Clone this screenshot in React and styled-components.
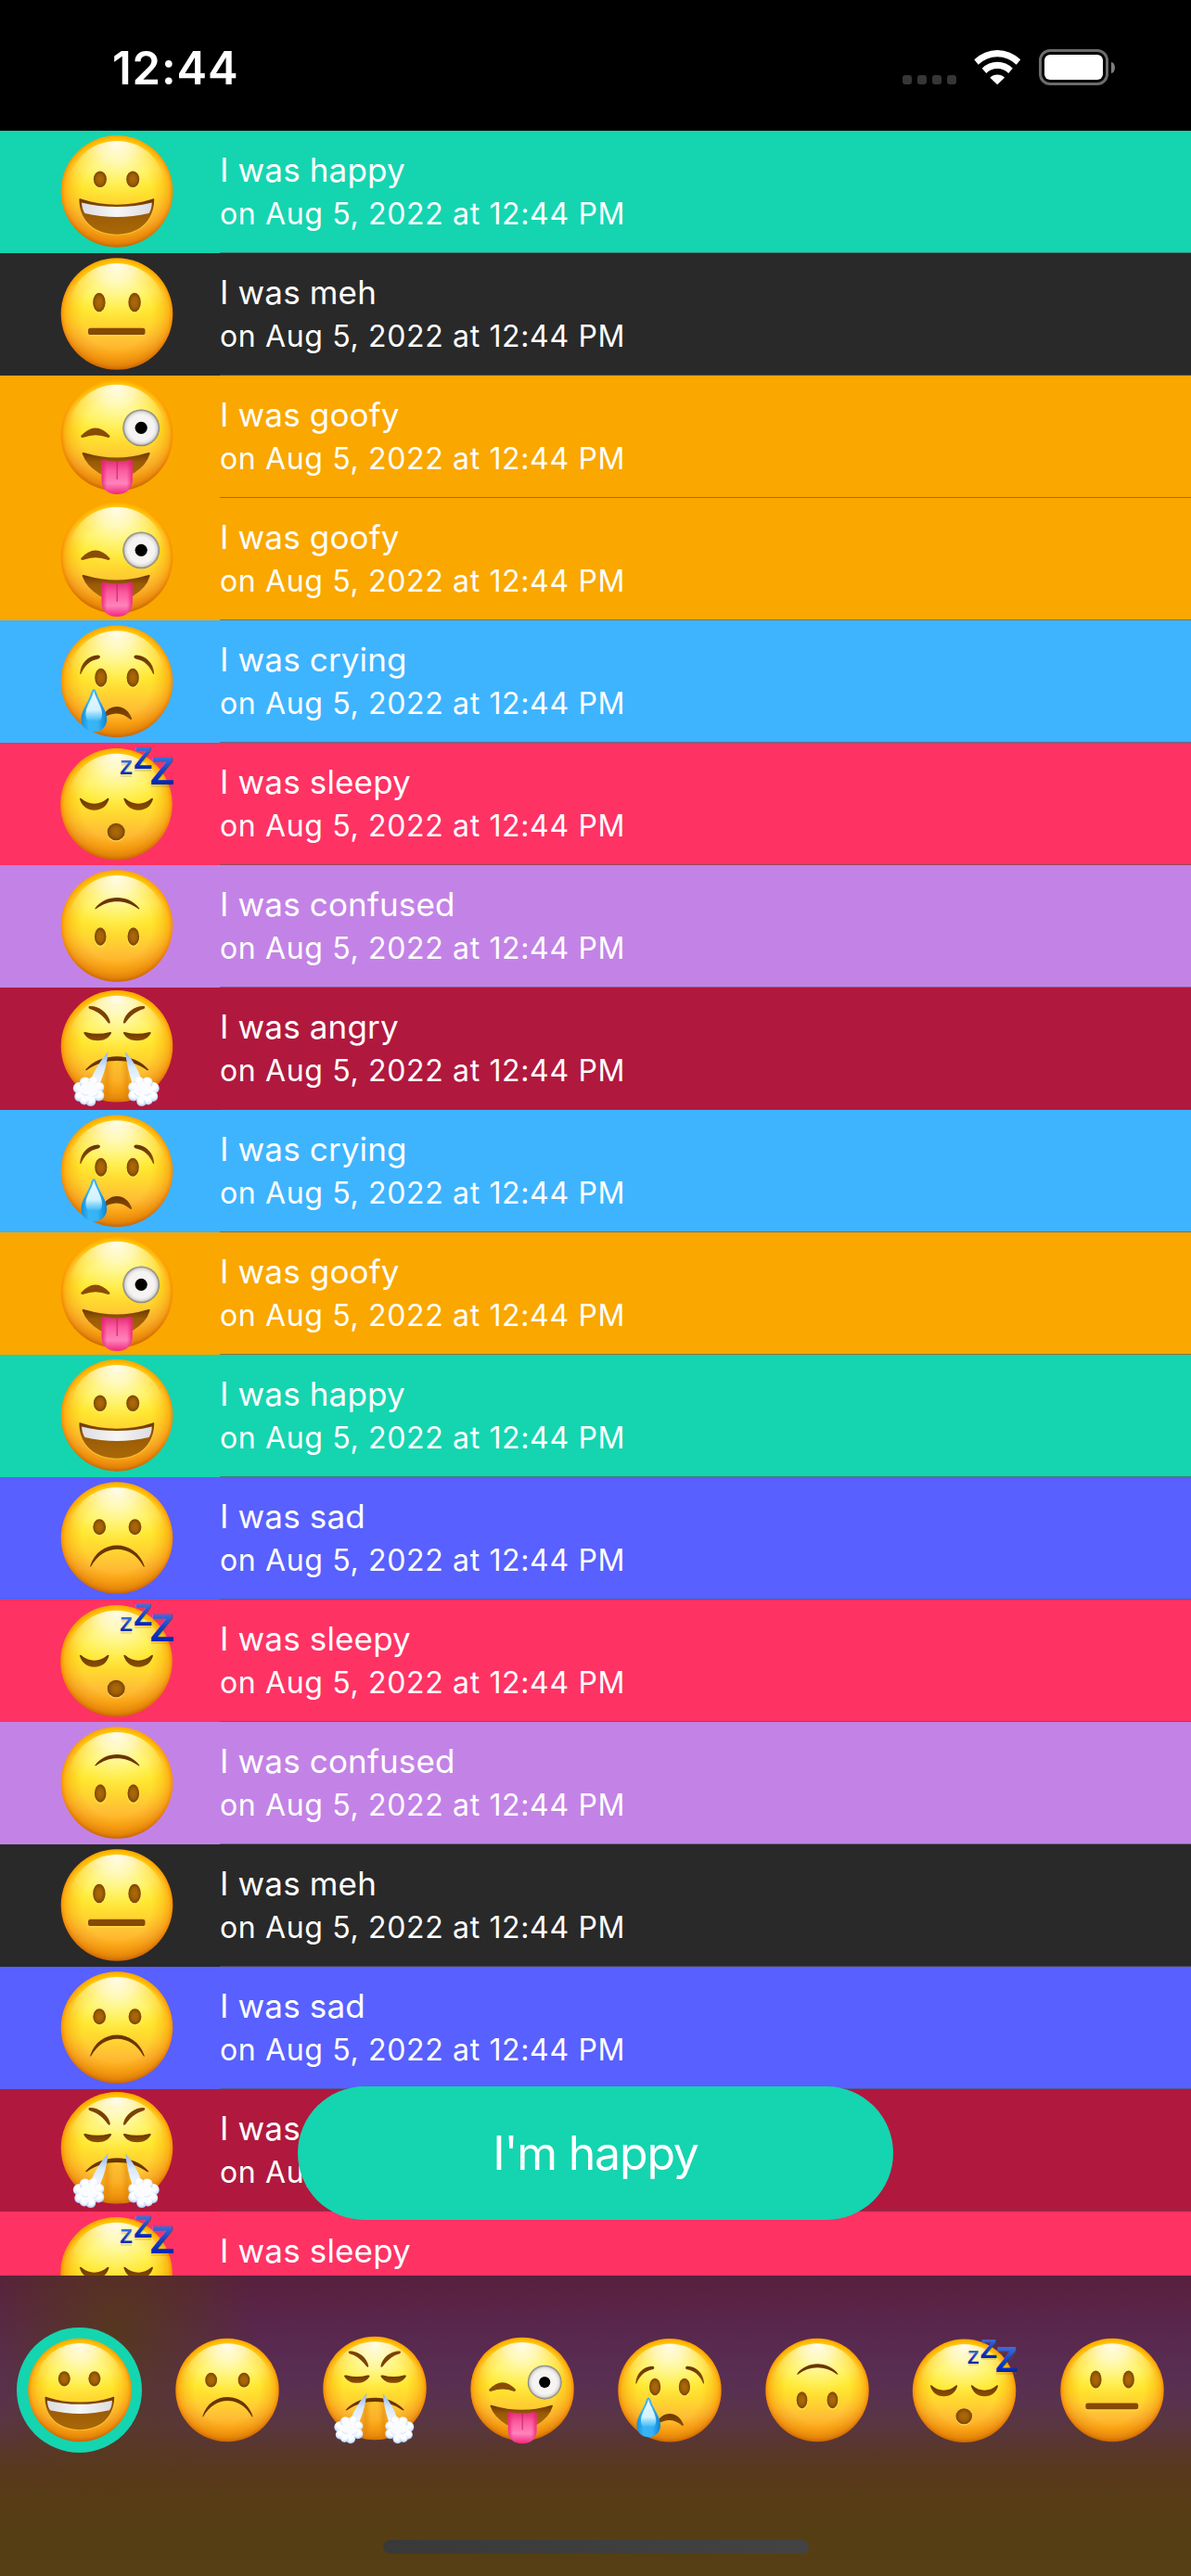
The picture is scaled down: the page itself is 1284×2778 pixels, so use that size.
import React from "react";
import styled, { createGlobalStyle } from "styled-components";

const GlobalStyle = createGlobalStyle`
  body {
    margin: 0;
    background: #000;
    font-family: Inter, "Liberation Sans", sans-serif;
  }
`;

const COLORS = {
  happy: "#14d5b0",
  meh: "#292929",
  goofy: "#faa700",
  crying: "#3eb4ff",
  sleepy: "#ff3264",
  confused: "#c383e6",
  angry: "#b1183e",
  sad: "#5860ff",
};

const ENTRIES = [
  "happy", "meh", "goofy", "goofy", "crying", "sleepy",
  "confused", "angry", "crying", "goofy", "happy", "sad",
  "sleepy", "confused", "meh", "sad", "angry", "sleepy",
];

const MOODS = ["happy", "sad", "angry", "goofy", "crying", "confused", "sleepy", "meh"];

const Screen = styled.div`
  position: relative;
  display: flex;
  flex-direction: column;
  width: 1284px;
  height: 2778px;
  overflow: hidden;
  background: #000;
`;

const StatusBar = styled.header`
  display: flex;
  justify-content: space-between;
  box-sizing: border-box;
  flex: none;
  height: 141px;
  padding: 53px 82px 0 121px;
`;

const Clock = styled.div`
  height: 41px;
  line-height: 41px;
  font-size: 49px;
  font-weight: 600;
  color: #fff;
  letter-spacing: 0.9px;
`;

const StatusIcons = styled.div`
  display: flex;
  height: 39px;
`;

const SignalDots = styled.div`
  display: flex;
  gap: 6px;
  padding-top: 28px;
  margin-right: 19px;
`;

const SignalDot = styled.span`
  width: 10px;
  height: 10px;
  border-radius: 3px;
  background: #363636;
`;

const WifiIcon = styled.svg`
  display: block;
  width: 51px;
  height: 38px;
  margin: 1px 19px 0 0;
`;

const Battery = styled.div`
  box-sizing: border-box;
  width: 75px;
  height: 39px;
  padding: 3px;
  border: 3px solid #6b6b6b;
  border-radius: 12px;
`;

const BatteryLevel = styled.div`
  height: 27px;
  border-radius: 6px;
  background: #fff;
`;

const BatteryCap = styled.span`
  width: 4px;
  height: 12px;
  margin: 14px 0 0 3px;
  border-radius: 0 4px 4px 0 / 0 6px 6px 0;
  background: #7d7d7d;
`;

const EntryList = styled.main`
  flex: none;
  height: 2313px;
  overflow: hidden;
`;

const EntryRow = styled.article`
  display: flex;
  height: 132px;
  padding-left: 60px;
  background: ${(p) => p.$color};
`;

const EntryBody = styled.div`
  display: flex;
  flex: 1;
  flex-direction: column;
  box-sizing: border-box;
  gap: 2px;
  margin-left: 45px;
  padding-top: 19px;
  border-bottom: 1px solid rgba(84, 84, 88, 0.65);
  color: #fff;
`;

const EntryTitle = styled.div`
  height: 46px;
  line-height: 46px;
  font-size: 35px;
  letter-spacing: 0.15px;
  white-space: nowrap;
`;

const EntryDate = styled.div`
  height: 46px;
  line-height: 46px;
  font-size: 32px;
  letter-spacing: 0.65px;
  white-space: nowrap;
`;

const AddButton = styled.button`
  position: absolute;
  left: 321px;
  bottom: 384px;
  width: 642px;
  height: 144px;
  padding: 0;
  border: 0;
  border-radius: 72px;
  background: ${(p) => p.$color};
  color: #fff;
  font: 400 50px/144px Inter, "Liberation Sans", sans-serif;
  letter-spacing: -1.2px;
`;

const Toolbar = styled.footer`
  display: flex;
  flex-direction: column;
  align-items: center;
  justify-content: space-between;
  box-sizing: border-box;
  flex: none;
  height: 324px;
  padding: 56px 18px 24px;
  background:
    radial-gradient(ellipse 150px 190px at 125px 60px, rgba(86, 60, 16, 0.75), rgba(86, 60, 16, 0.35) 55%, rgba(86, 60, 16, 0)),
    linear-gradient(
      #58203d 0, #59254a 45px, #592c52 93px, #593150 130px, #593642 159px,
      #593728 191px, #583919 219px, #563e14 265px, #563f14 324px
    );
`;

const MoodPicker = styled.nav`
  display: flex;
  gap: 24px;
`;

const MoodButton = styled.div`
  display: flex;
  align-items: center;
  justify-content: center;
  width: 135px;
  height: 135px;
  border-radius: 50%;
  background: ${(p) => p.$color || "transparent"};
`;

const HomeIndicator = styled.div`
  width: 459px;
  height: 15px;
  border-radius: 8px;
  background: linear-gradient(90deg, #393939, #434343);
`;

const FaceSvg = styled.svg`
  display: block;
  flex: none;
  width: ${(p) => p.$size}px;
  height: ${(p) => p.$size}px;
  overflow: visible;
`;

const Defs = styled.svg`
  position: absolute;
  width: 0;
  height: 0;
`;

function SharedGradients() {
  return (
    <Defs aria-hidden="true">
      <defs>
        <linearGradient id="rim" x1="0" y1="0" x2="0" y2="1">
          <stop offset="0" stopColor="#ffa600" />
          <stop offset="0.35" stopColor="#fc9200" />
          <stop offset="0.65" stopColor="#f28606" />
          <stop offset="1" stopColor="#c96502" />
        </linearGradient>
        <linearGradient id="skin" x1="0" y1="0" x2="0" y2="1">
          <stop offset="0" stopColor="#ffe600" />
          <stop offset="0.3" stopColor="#fff04a" />
          <stop offset="0.46" stopColor="#ffe72c" />
          <stop offset="0.6" stopColor="#ffd630" />
          <stop offset="0.76" stopColor="#ffbd35" />
          <stop offset="0.88" stopColor="#ffac18" />
          <stop offset="1" stopColor="#fca010" />
        </linearGradient>
        <radialGradient id="fade">
          <stop offset="0.62" stopColor="#fff" />
          <stop offset="0.82" stopColor="#fff" stopOpacity="0.72" />
          <stop offset="0.93" stopColor="#fff" stopOpacity="0.45" />
          <stop offset="1" stopColor="#fff" stopOpacity="0" />
        </radialGradient>
        <mask id="soft" maskContentUnits="objectBoundingBox">
          <circle cx="0.5" cy="0.5" r="0.5" fill="url(#fade)" />
        </mask>
        <radialGradient id="shine" cx="0.5" cy="0.02" r="0.62">
          <stop offset="0" stopColor="#fffef4" stopOpacity="0.96" />
          <stop offset="0.3" stopColor="#fffcd8" stopOpacity="0.8" />
          <stop offset="0.7" stopColor="#fff88c" stopOpacity="0.4" />
          <stop offset="1" stopColor="#ffee50" stopOpacity="0" />
        </radialGradient>
        <radialGradient id="brown">
          <stop offset="0" stopColor="#ad6b06" />
          <stop offset="0.55" stopColor="#a06007" />
          <stop offset="1" stopColor="#7a4304" />
        </radialGradient>
        <linearGradient id="brow" x1="0" y1="0" x2="0" y2="1">
          <stop offset="0" stopColor="#6a3500" />
          <stop offset="1" stopColor="#8c4f06" />
        </linearGradient>
        <linearGradient id="mouth" x1="0" y1="0" x2="0" y2="1">
          <stop offset="0" stopColor="#6c3600" />
          <stop offset="0.4" stopColor="#9a5b06" />
          <stop offset="1" stopColor="#aa6908" />
        </linearGradient>
        <linearGradient id="teeth" x1="0" y1="0" x2="1" y2="0">
          <stop offset="0" stopColor="#dcdce2" />
          <stop offset="0.5" stopColor="#f6f6f6" />
          <stop offset="1" stopColor="#dcdce2" />
        </linearGradient>
        <radialGradient id="eyeball">
          <stop offset="0.7" stopColor="#f5f4f2" />
          <stop offset="0.86" stopColor="#dedddc" />
          <stop offset="1" stopColor="#77746f" />
        </radialGradient>
        <linearGradient id="tongue" x1="0" y1="0" x2="0" y2="1">
          <stop offset="0" stopColor="#e02c74" />
          <stop offset="0.3" stopColor="#fb5a9f" />
          <stop offset="0.68" stopColor="#ff83bb" />
          <stop offset="1" stopColor="#f0267c" />
        </linearGradient>
        <linearGradient id="tongueEdge" x1="0" y1="0" x2="1" y2="0">
          <stop offset="0" stopColor="#ea1a70" stopOpacity="0.8" />
          <stop offset="0.18" stopColor="#ea1a70" stopOpacity="0" />
          <stop offset="0.82" stopColor="#ea1a70" stopOpacity="0" />
          <stop offset="1" stopColor="#ea1a70" stopOpacity="0.8" />
        </linearGradient>
        <linearGradient id="tear" x1="0" y1="0" x2="1" y2="0">
          <stop offset="0" stopColor="#1390dc" />
          <stop offset="0.3" stopColor="#38b6f6" />
          <stop offset="0.65" stopColor="#35b2f5" />
          <stop offset="1" stopColor="#0c83d6" />
        </linearGradient>
        <linearGradient id="tearShine" x1="0" y1="0" x2="0" y2="1">
          <stop offset="0" stopColor="#fff" stopOpacity="0.9" />
          <stop offset="0.6" stopColor="#e2f9ff" stopOpacity="0.9" />
          <stop offset="0.85" stopColor="#6fd0fb" stopOpacity="0.7" />
          <stop offset="1" stopColor="#1fa4f2" stopOpacity="0" />
        </linearGradient>
        <linearGradient id="zed" x1="0" y1="0" x2="0" y2="1">
          <stop offset="0.2" stopColor="#3f6edb" />
          <stop offset="0.5" stopColor="#1745c6" />
          <stop offset="0.8" stopColor="#0226b2" />
        </linearGradient>
        <linearGradient id="jet" x1="0" y1="0" x2="0" y2="1">
          <stop offset="0" stopColor="#8fb2ea" />
          <stop offset="0.5" stopColor="#d9e8fc" />
          <stop offset="1" stopColor="#f4f9ff" />
        </linearGradient>
        <radialGradient id="puff" cx="0.5" cy="0.35" r="0.62">
          <stop offset="0.4" stopColor="#ffffff" />
          <stop offset="0.75" stopColor="#e0ecfe" />
          <stop offset="1" stopColor="#a9c8f6" />
        </radialGradient>
        <linearGradient id="chin" x1="0" y1="0" x2="1" y2="0">
          <stop offset="0" stopColor="#e08408" stopOpacity="0" />
          <stop offset="0.22" stopColor="#e08408" stopOpacity="0.6" />
          <stop offset="0.4" stopColor="#f09a14" stopOpacity="0.25" />
          <stop offset="0.6" stopColor="#f09a14" stopOpacity="0.25" />
          <stop offset="0.78" stopColor="#e08408" stopOpacity="0.6" />
          <stop offset="1" stopColor="#e08408" stopOpacity="0" />
        </linearGradient>
      </defs>
    </Defs>
  );
}

function Eyes({ left, right, y, rx, ry }) {
  return (
    <g fill="url(#brown)">
      <ellipse cx={left} cy={y + 1} rx={rx + 0.6} ry={ry + 0.8} fill="#fff25a" opacity="0.55" />
      <ellipse cx={right} cy={y + 1} rx={rx + 0.6} ry={ry + 0.8} fill="#fff25a" opacity="0.55" />
      <ellipse cx={left} cy={y} rx={rx} ry={ry} />
      <ellipse cx={right} cy={y} rx={rx} ry={ry} />
    </g>
  );
}

const PUFFS = [
  [-10.5, -3, 6.5], [-10, 6, 5.5], [-4, -9, 6], [5, -10, 5.5],
  [11, -4, 5.5], [10.5, 5, 6], [2, 11, 5.5], [-5, 10, 5],
];

function Cloud({ x, y, flip }) {
  return (
    <g transform={`translate(${x} ${y}) scale(${flip ? -1 : 1} 1)`}>
      {PUFFS.map(([cx, cy, r]) => (
        <circle key={`${cx},${cy}`} cx={cx} cy={cy} r={r} fill="url(#puff)" />
      ))}
      <circle r="10" fill="#fafcff" />
      <path d="M-8 2q3 4 7 2M4 6q4 0 6 -4" fill="none" stroke="#dce8fb" strokeWidth="1.2" />
    </g>
  );
}

const FEATURES = {
  happy: {
    cy: 65.4,
    art: (
      <>
        <Eyes left={47.9} right={83.2} y={52.3} rx={7} ry={8.8} />
        <path d="M25.6 74.4C25.4 98 41 112.6 66 112.6S106.600 98 106.200 74.400Q87 81 66 81T25.600 74.400Z" fill="#ffe14e" opacity="0.5" />
        <path d="M25.400 75C25.200 72.800 26.800 73.200 29 74C52 81.500 80 81.500 103 74C105.200 73.200 106.500 72.800 106.200 75C105.500 98 89 111.700 66 111.700S26 98 25.400 75Z" fill="url(#mouth)" />
        <path d="M28 77.500C52 83.500 80 83.500 103.800 77.500Q103.500 85 100.500 89C78 94.300 54 94.300 31.500 89Q28.500 85 28 77.500Z" fill="url(#teeth)" />
      </>
    ),
  },
  meh: {
    cy: 65.5,
    art: (
      <>
        <Eyes left={46.9} right={85.1} y={53} rx={6.7} ry={10.3} />
        <rect x="35" y="82" width="61.5" height="7.5" rx="3" fill="#ffe14e" opacity="0.6" />
        <rect x="35" y="80.7" width="61.5" height="7.3" rx="2.6" fill="#854a05" />
      </>
    ),
  },
  goofy: {
    cy: 64.3,
    art: (
      <>
        <path d="M27.2 65Q43 48 58.5 65Q58.5 67.5 56 66.8Q43 61.8 30 66.8Q27 67.5 27.2 65Z" fill="#8a4c05" />
        <circle cx="92.2" cy="56.3" r="19.9" fill="url(#eyeball)" />
        <circle cx="92.2" cy="56.3" r="6.6" fill="#000" />
        <path d="M28.8 84.5C28.5 82.5 30 82.9 32 83.5Q66 93.5 98.3 83.5C100.5 82.9 101.9 82.5 101.5 84.500Q98 97 83 106Q66 111 48 106Q33 97 28.800 84.500Z" fill="url(#mouth)" />
        <path d="M49.5 93Q49.5 91 51.5 91Q66 94.5 80.8 91Q82.8 91 82.8 93V113C82.8 122 76 128 66.2 128S49.5 122 49.5 113Z" fill="url(#tongue)" />
        <path d="M49.5 93Q49.5 91 51.5 91Q66 94.5 80.8 91Q82.8 91 82.8 93V113C82.8 122 76 128 66.2 128S49.5 122 49.5 113Z" fill="url(#tongueEdge)" />
        <path d="M66.2 93V112" stroke="#bd2463" strokeWidth="1" />
      </>
    ),
  },
  crying: {
    cy: 65.8,
    art: (
      <>
        <path d="M26.2 57.5C27 46 35 38 45.5 37.5C48.5 37.5 48.8 40.5 46 41.5C36.5 43.5 31.5 48.5 27.5 57.5Q26.5 58.5 26.2 57.5Z" fill="url(#brow)" />
        <path d="M106.2 57.5C105.4 46 97.4 38 86.9 37.5C83.9 37.5 83.6 40.5 86.4 41.5C95.9 43.5 100.9 48.5 104.9 57.5Q105.9 58.5 106.2 57.5Z" fill="url(#brow)" />
        <Eyes left={48.8} right={83.2} y={61.7} rx={6.6} ry={10} />
        <path d="M49 106.5C56 88.5 76 88.5 82.2 106Q82 107.8 80 106.5C71 98.5 61 98.5 49 106.5Z" fill="url(#brow)" />
        <path d="M41.2 74.2Q43 74.2 44 78C47 88 55.2 97 55.2 106.5C55.2 115 49 120.3 41.3 120.3S27.5 115 27.5 106.5C27.5 97 35.5 88 38.4 78Q39.5 74.2 41.2 74.2Z" fill="url(#tear)" />
        <path d="M41.2 76C43 84 50 93 50 101C50 108 46 111 41.2 111S32.4 108 32.4 101C32.4 93 39.5 84 41.2 76Z" fill="url(#tearShine)" />
      </>
    ),
  },
  sleepy: {
    cy: 66.3,
    cx: 65.5,
    art: (
      <>
        <g fill="url(#brow)">
          <path d="M25.8 60.3Q26 59.2 27.5 60C36 67.5 47.3 67.5 55.8 60Q57.3 59.2 57.5 60.5C55.5 68 50 72.7 41.7 72.7S28 68 25.8 60.3Z" />
          <path d="M73.3 60.3Q73.5 59.2 75 60C83.5 67.5 94.8 67.5 103.3 60Q104.8 59.2 105 60.5C103 68 97.5 72.7 89.2 72.7S75.5 68 73.3 60.3Z" />
        </g>
        <ellipse cx="65.2" cy="97" rx="9.9" ry="9.8" fill="#ffe36a" opacity="0.6" />
        <ellipse cx="65.2" cy="96" rx="9.5" ry="9.3" fill="url(#brown)" />
        <g fontFamily="Liberation Sans, sans-serif" fontWeight="700">
          <g fill="#8a6a10" opacity="0.18">
            <text x="69.3" y="37.3" fontSize="22.2">Z</text>
            <text x="84.2" y="30.7" fontSize="32.5">Z</text>
            <text x="101.5" y="48" fontSize="42.7">Z</text>
          </g>
          <g fill="url(#zed)">
            <text x="69.3" y="34.3" fontSize="22.2">Z</text>
            <text x="84.2" y="27.7" fontSize="32.5">Z</text>
            <text x="101.8" y="44.7" fontSize="42.7">Z</text>
          </g>
        </g>
      </>
    ),
  },
  confused: {
    cy: 65.5,
    art: (
      <>
        <path d="M42.5 46.5C54 31.2 78.500 31.2 90.2 46.5Q90.5 48 89 47C75 36.5 57.5 36.5 43.7 47Q42.2 48 42.5 46.5Z" fill="#6a3500" />
        <Eyes left={48.2} right={83.8} y={77} rx={6.3} ry={9.7} />
      </>
    ),
  },
  angry: {
    cy: 63.3,
    art: (
      <>
        <path d="M36.5 20C46 19.5 57 27 58.8 37.5Q58.5 39.5 56.5 38C51.5 31 45.5 25.5 36.5 23Q34.3 20.5 36.5 20Z" fill="#7a4103" />
        <path d="M95.2 20C85.7 19.5 74.7 27 72.9 37.5Q73.2 39.5 75.2 38C80.2 31 86.2 25.5 95.2 23Q97.4 20.5 95.2 20Z" fill="#7a4103" />
        <g fill="url(#brow)">
          <path d="M30.2 49Q30.5 47.6 33 48.2Q45 51.5 57.5 48.2Q60 47.6 60.2 49C57 55 52 57.2 45.2 57.2S33.5 55 30.2 49Z" />
          <path d="M72.8 49Q73.1 47.6 75.6 48.2Q87.6 51.5 100.1 48.2Q102.6 47.6 102.8 49C99.6 55 94.600 57.2 87.8 57.2S76.1 55 72.8 49Z" />
        </g>
        <path d="M47 80H85V121Q66 126 47 121Z" fill="url(#chin)" />
        <path d="M32.2 88.5C48 69.5 84.5 69.5 100.2 88.5Q100 90 98 88.8C80 75.8 52 75.8 34 88.8Q32.3 90 32.2 88.5Z" fill="#6a3500" />
        <path d="M56.5 69.3Q55.500 85 47.8 103L37.5 100Q45 82 56.5 69.3Z" fill="url(#jet)" />
        <path d="M75.2 69.3Q76.5 85 82.5 103L92.800 100Q87 82 75.2 69.3Z" fill="url(#jet)" />
        <Cloud x={35.8} y={111.5} />
        <Cloud x={94.7} y={111.5} flip />
      </>
    ),
  },
  sad: {
    cy: 65.5,
    art: (
      <>
        <Eyes left={47.2} right={85.5} y={53.7} rx={6.9} ry={8.5} />
        <path d="M37.2 96C46 66 86 66 95.8 96Q95.5 97.5 94.5 96C81 71.8 52 71.8 38.3 96Q37.2 97.5 37.2 96Z" fill="#6a3500" />
      </>
    ),
  },
};

function Face({ mood, size }) {
  const { cy, cx = 66, art } = FEATURES[mood];
  return (
    <FaceSvg $size={size} viewBox="0 0 132 132" role="img" aria-label={mood}>
      <circle cx={cx} cy={cy} r="60.3" fill="url(#rim)" />
      <circle cx={cx} cy={cy} r="60.3" fill="url(#skin)" mask="url(#soft)" />
      <ellipse cx={cx} cy={cy - 2.5} rx="52.5" ry="52" fill="url(#shine)" />
      {art}
    </FaceSvg>
  );
}

function Wifi() {
  return (
    <WifiIcon viewBox="0 0 51 38" fill="#fff">
      <path d="M.3 10.3A35.5 35.5 0 0 1 50.2 10.3L45.7 15.7A29 29 0 0 0 4.7 15.7Z" />
      <path d="M8.7 19.7A23 23 0 0 1 41.8 19.7L37.2 25A17 17 0 0 0 13.3 25Z" />
      <path d="M17.3 29.7A11.5 11.5 0 0 1 33.1 29.7L25.2 37.2Z" />
    </WifiIcon>
  );
}

export default function App() {
  const selected = "happy";
  return (
    <Screen>
      <GlobalStyle />
      <SharedGradients />
      <StatusBar>
        <Clock>12:44</Clock>
        <StatusIcons>
          <SignalDots>
            <SignalDot />
            <SignalDot />
            <SignalDot />
            <SignalDot />
          </SignalDots>
          <Wifi />
          <Battery>
            <BatteryLevel />
          </Battery>
          <BatteryCap />
        </StatusIcons>
      </StatusBar>
      <EntryList>
        {ENTRIES.map((mood, i) => (
          <EntryRow key={i} $color={COLORS[mood]}>
            <Face mood={mood} size={132} />
            <EntryBody>
              <EntryTitle>I was {mood}</EntryTitle>
              <EntryDate>on Aug 5, 2022 at 12:44 PM</EntryDate>
            </EntryBody>
          </EntryRow>
        ))}
      </EntryList>
      <Toolbar>
        <MoodPicker>
          {MOODS.map((mood) => (
            <MoodButton key={mood} $color={mood === selected ? COLORS[mood] : undefined}>
              <Face mood={mood} size={122} />
            </MoodButton>
          ))}
        </MoodPicker>
        <HomeIndicator />
      </Toolbar>
      <AddButton $color={COLORS[selected]}>I'm {selected}</AddButton>
    </Screen>
  );
}
